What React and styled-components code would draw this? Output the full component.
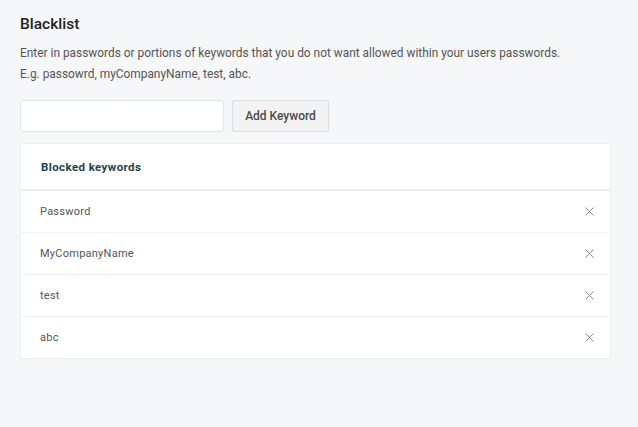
import React, { useState } from 'react';
import styled, { createGlobalStyle } from 'styled-components';

const GlobalStyle = createGlobalStyle`
  html, body {
    margin: 0;
    padding: 0;
    background: #f6f7f8;
    font-family: Roboto, "Liberation Sans", Arial, sans-serif;
  }
`;

const Page = styled.div`
  padding: 13px 28px 40px 20px;
  min-height: 427px;
  box-sizing: border-box;
`;

const Title = styled.h2`
  margin: 0;
  font-size: 15.5px;
  font-weight: 500;
  color: #222;
  line-height: 22px;
`;

const Description = styled.p`
  margin: 8px 0 0;
  font-size: 11.9px;
  line-height: 21px;
  color: #555;
`;

const Form = styled.div`
  display: flex;
  gap: 8px;
  margin-top: 15px;
`;

const Input = styled.input`
  width: 204px;
  height: 32px;
  box-sizing: border-box;
  border: 1px solid #e2e4e6;
  border-radius: 2px;
  background: #fff;
  outline: none;
  padding: 0 8px;
  font: inherit;
`;

const Button = styled.button`
  width: 97px;
  height: 32px;
  padding: 0;
  border: 1px solid #dcdfe1;
  border-radius: 2px;
  background: #f3f3f3;
  color: #4a4a4a;
  font-family: inherit;
  font-size: 12px;
  font-weight: 500;
  cursor: pointer;
`;

const Card = styled.div`
  margin-top: 11px;
  width: 591px;
  box-sizing: border-box;
  background: #fff;
  border: 1px solid #eceef0;
`;

const CardHeader = styled.div`
  height: 45px;
  display: flex;
  align-items: center;
  padding-left: 20px;
  border-bottom: 2px solid #eceef0;
`;

const CardTitle = styled.h3`
  margin: 0;
  font-size: 11.5px;
  font-weight: 700;
  letter-spacing: 0.4px;
  color: #1d4150;
`;

const Row = styled.div`
  height: 41px;
  display: flex;
  align-items: center;
  justify-content: space-between;
  padding: 0 15px 0 19px;
  border-top: ${(p) => (p.$first ? 'none' : '1px solid #f0f1f2')};
`;

const Keyword = styled.span`
  font-size: 11px;
  color: #555;
  letter-spacing: 0.25px;
`;

const Remove = styled.button`
  width: 11px;
  height: 11px;
  padding: 0;
  border: none;
  background: none;
  display: flex;
  align-items: center;
  justify-content: center;
  cursor: pointer;
`;

const CloseIcon = () => (
  <svg width="9" height="9" viewBox="0 0 9 9">
    <path d="M0.5 0.5L8.5 8.5M8.5 0.5L0.5 8.5" stroke="#8a8a8a" strokeWidth="1" />
  </svg>
);

export default function App() {
  const [keywords, setKeywords] = useState(['Password', 'MyCompanyName', 'test', 'abc']);
  const [value, setValue] = useState('');

  const addKeyword = () => {
    if (!value.trim()) return;
    setKeywords([...keywords, value.trim()]);
    setValue('');
  };

  return (
    <>
      <GlobalStyle />
      <Page>
        <Title>Blacklist</Title>
        <Description>
          Enter in passwords or portions of keywords that you do not want allowed within your users passwords.
          <br />
          E.g. passowrd, myCompanyName, test, abc.
        </Description>
        <Form>
          <Input value={value} onChange={(e) => setValue(e.target.value)} />
          <Button onClick={addKeyword}>Add Keyword</Button>
        </Form>
        <Card>
          <CardHeader>
            <CardTitle>Blocked keywords</CardTitle>
          </CardHeader>
          {keywords.map((k, i) => (
            <Row key={k + i} $first={i === 0}>
              <Keyword>{k}</Keyword>
              <Remove onClick={() => setKeywords(keywords.filter((_, j) => j !== i))}>
                <CloseIcon />
              </Remove>
            </Row>
          ))}
        </Card>
      </Page>
    </>
  );
}
